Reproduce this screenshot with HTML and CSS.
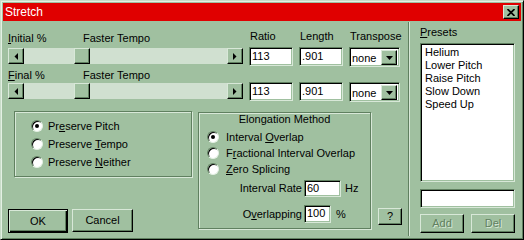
FILE: index.html
```html
<!DOCTYPE html>
<html lang="en">
<head>
    <meta charset="UTF-8">
    <meta name="viewport" content="width=device-width, initial-scale=1.0">
    <title>Stretch</title>
    <link rel="stylesheet" href="styles.css">
</head>
<body>
<div class="window">
    <div class="titlebar">
        <span class="title">Stretch</span>
        <span class="close-btn raised">
            <svg width="8" height="7" viewBox="0 0 8 7"><path d="M0.5 0 L7.5 7 M7.5 0 L0.5 7" stroke="#000" stroke-width="1.7"/></svg>
        </span>
    </div>
    <div class="dialog">
        <div class="main">
            <div class="sliders">
                <div class="slider-label"><span class="lbl-a"><u>I</u>nitial %</span><span>Faster Tempo</span></div>
                <div class="col-label">Ratio</div>
                <div class="col-label">Length</div>
                <div class="col-label">Transpose</div>

                <div class="scrollbar">
                    <span class="sb-btn raised"><svg width="4" height="7" viewBox="0 0 4 7"><polygon points="4,0 4,7 0.5,3.5" fill="#000"/></svg></span>
                    <span class="sb-gap"></span>
                    <span class="sb-thumb raised"></span>
                    <span class="sb-rest"></span>
                    <span class="sb-btn raised"><svg width="4" height="7" viewBox="0 0 4 7"><polygon points="0,0 0,7 3.5,3.5" fill="#000"/></svg></span>
                </div>
                <div class="field">113</div>
                <div class="field">.901</div>
                <div class="combo"><span class="combo-text">none</span><span class="drop raised"><svg width="7" height="4" viewBox="0 0 7 4"><polygon points="0,0 7,0 3.5,4" fill="#000"/></svg></span></div>

                <div class="slider-label second"><span class="lbl-a"><u>F</u>inal %</span><span>Faster Tempo</span></div>

                <div class="scrollbar">
                    <span class="sb-btn raised"><svg width="4" height="7" viewBox="0 0 4 7"><polygon points="4,0 4,7 0.5,3.5" fill="#000"/></svg></span>
                    <span class="sb-gap"></span>
                    <span class="sb-thumb raised"></span>
                    <span class="sb-rest"></span>
                    <span class="sb-btn raised"><svg width="4" height="7" viewBox="0 0 4 7"><polygon points="0,0 0,7 3.5,3.5" fill="#000"/></svg></span>
                </div>
                <div class="field">113</div>
                <div class="field">.901</div>
                <div class="combo"><span class="combo-text">none</span><span class="drop raised"><svg width="7" height="4" viewBox="0 0 7 4"><polygon points="0,0 7,0 3.5,4" fill="#000"/></svg></span></div>
            </div>

            <div class="middle">
                <div class="left-col">
                    <div class="group preserve">
                        <div class="opt"><span class="radio on"></span><span>Pr<u>e</u>serve Pitch</span></div>
                        <div class="opt"><span class="radio"></span><span>Preserve <u>T</u>empo</span></div>
                        <div class="opt"><span class="radio"></span><span>Preserve <u>N</u>either</span></div>
                    </div>
                    <div class="btn-row">
                        <span class="btn default">OK</span>
                        <span class="btn cancel raised">Cancel</span>
                    </div>
                </div>

                <div class="group elong">
                    <div class="group-title">Elongation Method</div>
                    <div class="elong-opts">
                        <div class="opt"><span class="radio on"></span><span>Interval <u>O</u>verlap</span></div>
                        <div class="opt"><span class="radio"></span><span>F<u>r</u>actional Interval Overlap</span></div>
                        <div class="opt"><span class="radio"></span><span><u>Z</u>ero Splicing</span></div>
                    </div>
                    <div class="rate-row">
                        <span class="rate-label">Interval Rate</span>
                        <span class="field rate">60</span>
                        <span class="unit">Hz</span>
                    </div>
                    <div class="rate-row lap">
                        <span class="rate-label">O<u>v</u>erlapping</span>
                        <span class="field lap-field">100</span>
                        <span class="unit pct">%</span>
                    </div>
                </div>

                <span class="btn help raised">?</span>
            </div>
        </div>

        <div class="sep"></div>

        <div class="presets">
            <div class="presets-label"><u>P</u>resets</div>
            <div class="field listbox">
                <div>Helium</div>
                <div>Lower Pitch</div>
                <div>Raise Pitch</div>
                <div>Slow Down</div>
                <div>Speed Up</div>
            </div>
            <div class="field name-field"></div>
            <div class="preset-btns">
                <span class="btn raised disabled">Add</span>
                <span class="btn raised disabled">Del</span>
            </div>
        </div>
    </div>
</div>
</body>
</html>
```

FILE: styles.css
```css
html, body {
    margin: 0;
    padding: 0;
}

body {
    width: 524px;
    height: 240px;
    overflow: hidden;
    background-color: #a0c0a0;
    font-family: "Liberation Sans", Arial, sans-serif;
    font-size: 11px;
    line-height: 13px;
    color: #000;
}

.window {
    box-sizing: border-box;
    width: 524px;
    height: 240px;
    padding: 2px;
    background-color: #a0c0a0;
    border: 1px solid;
    border-color: #c8dcc8 #000 #000 #c8dcc8;
    box-shadow: inset 1px 1px 0 #e4f0e4, inset -1px -1px 0 #608060;
    display: flex;
    flex-direction: column;
}

/* 3d frames */
.raised {
    box-sizing: border-box;
    background-color: #a0c0a0;
    border: 1px solid;
    border-color: #d8e8d8 #000 #000 #d8e8d8;
    box-shadow: inset -1px -1px 0 #608060;
}

.field {
    box-sizing: border-box;
    background-color: #fff;
    border: 1px solid;
    border-color: #608060 #d8e8d8 #d8e8d8 #608060;
    box-shadow: inset 1px 1px 0 #000, inset -1px -1px 0 #a0c0a0;
    padding: 0 2px;
}

.titlebar {
    height: 18px;
    background-color: #e00000;
    display: flex;
    align-items: center;
    justify-content: space-between;
    padding-left: 2px;
}

.title {
    color: #fff;
    font-size: 12px;
    line-height: 18px;
}

.close-btn {
    width: 16px;
    height: 14px;
    margin-right: 2px;
    display: flex;
    align-items: center;
    justify-content: center;
}

.dialog {
    flex: 1;
    display: flex;
}

.main {
    box-sizing: border-box;
    width: 405px;
    padding: 8px 0 0 5px;
}

.sliders {
    display: grid;
    grid-template-columns: 235px 44px 44px 51px;
    grid-template-rows: 18px 20px 15px 20px;
    column-gap: 6px;
}

.slider-label {
    display: flex;
    align-self: end;
    padding-bottom: 2px;
}

.slider-label.second {
    grid-column: 1 / -1;
    align-self: start;
    padding: 2px 0 0 0;
}

.lbl-a {
    width: 75px;
}

.col-label {
    padding: 1px 0 0 1px;
}

.scrollbar {
    display: flex;
    height: 16px;
    margin-top: 1px;
    background-color: #d0e0d0;
}

.sb-btn, .sb-thumb {
    width: 16px;
    height: 16px;
    flex: none;
    display: flex;
    align-items: center;
    justify-content: center;
}

.sb-gap {
    width: 50px;
    flex: none;
}

.sb-rest {
    flex: 1;
}

.sliders .field {
    height: 19px;
    line-height: 17px;
}

.combo {
    box-sizing: border-box;
    height: 20px;
    display: flex;
    align-items: center;
    padding: 0 2px 0 2px;
    background-color: #fff;
    border: 1px solid;
    border-color: #608060 #d8e8d8 #d8e8d8 #608060;
    box-shadow: inset 1px 1px 0 #000, inset -1px -1px 0 #a0c0a0;
}

.combo-text {
    flex: 1;
    padding-top: 2px;
}

.drop {
    width: 16px;
    height: 15px;
    margin-top: 1px;
    display: flex;
    align-items: center;
    justify-content: center;
}

.middle {
    display: flex;
    align-items: flex-start;
    margin-top: 9px;
}

.left-col {
    width: 185px;
    display: flex;
    flex-direction: column;
}

.group {
    box-sizing: border-box;
    border: 1px solid #608060;
    box-shadow: inset 1px 1px 0 #d8e8d8, 1px 1px 0 #d8e8d8;
}

.preserve {
    width: 178px;
    height: 66px;
    margin-left: 6px;
    padding: 5px 0 0 16px;
}

.opt {
    display: flex;
    align-items: center;
    height: 18px;
    gap: 5px;
}

.radio {
    box-sizing: border-box;
    width: 12px;
    height: 12px;
    flex: none;
    border-radius: 50%;
    background-color: #fff;
    border: 1px solid;
    border-color: #608060 #e4f0e4 #e4f0e4 #608060;
    box-shadow: inset 1px 1px 0 #000;
    display: flex;
    align-items: center;
    justify-content: center;
}

.radio.on::after {
    content: "";
    width: 4px;
    height: 4px;
    border-radius: 50%;
    background-color: #000;
}

.btn-row {
    display: flex;
    gap: 4px;
    margin-top: 32px;
}

.btn {
    display: flex;
    align-items: center;
    justify-content: center;
    box-sizing: border-box;
}

.btn.default {
    width: 60px;
    height: 24px;
    background-color: #a0c0a0;
    border: 1px solid #000;
    box-shadow: inset 1px 1px 0 #d8e8d8, inset -1px -1px 0 #000, inset -2px -2px 0 #608060;
}

.btn.cancel {
    width: 61px;
    height: 23px;
}

.elong {
    width: 173px;
    height: 117px;
    margin: 1px 0 0 5px;
}

.group-title {
    text-align: center;
}

.elong-opts {
    margin-top: 3px;
    padding-left: 8px;
}

.elong-opts .opt {
    height: 16px;
    gap: 7px;
}

.rate-row {
    display: flex;
    align-items: center;
    height: 17px;
    margin-top: 3px;
}

.rate-row.lap {
    height: 18px;
    margin-top: 8px;
}

.rate-label {
    width: 103px;
    text-align: right;
}

.rate-row .field {
    height: 100%;
    margin-left: 2px;
    line-height: 15px;
}

.rate {
    width: 37px;
}

.lap-field {
    width: 27px;
}

.unit {
    margin-left: 4px;
}

.unit.pct {
    margin-left: 5px;
}

.btn.help {
    width: 24px;
    height: 17px;
    margin: 97px 0 0 7px;
}

.sep {
    width: 0;
    border-left: 1px solid #608060;
    border-right: 1px solid #d8e8d8;
    margin: 1px 0 1px 0;
}

.presets {
    flex: 1;
    display: flex;
    flex-direction: column;
    padding: 5px 6px 0 10px;
}

.presets-label {
    margin-bottom: 4px;
}

.listbox {
    height: 139px;
    padding: 2px 0 0 4px;
}

.name-field {
    height: 19px;
    margin-top: 7px;
}

.preset-btns {
    display: flex;
    justify-content: space-between;
    margin-top: 6px;
}

.preset-btns .btn {
    width: 44px;
    height: 19px;
}

.btn.disabled {
    color: #608060;
    text-shadow: 1px 1px 0 #d8e8d8;
}
```
